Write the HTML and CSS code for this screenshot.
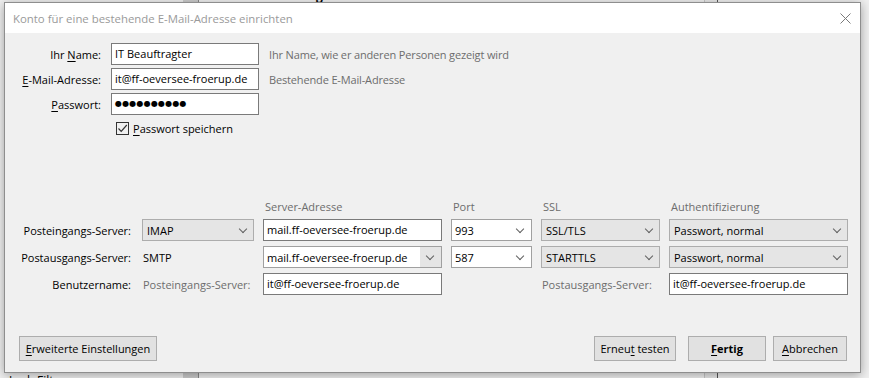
FILE: index.html
```html
<!DOCTYPE html>
<html lang="de">
<head>
    <meta charset="UTF-8">
    <meta name="viewport" content="width=device-width, initial-scale=1.0">
    <title>Konto einrichten</title>
    <link rel="stylesheet" href="styles.css">
</head>
<body>

    <!-- the mail client behind the dialog -->
    <div class="app">
        <div class="folder-pane">
            <div class="pane-top">Konten &amp; Ordner</div>
            <div class="pane-bottom">Junk-Filter</div>
        </div>
        <div class="scrollbar"></div>
        <div class="main-pane">
            <div class="pane-top bold">Server-Einstellungen</div>
        </div>
        <div class="scrollbar light"></div>
        <div class="side-pane"></div>
    </div>

    <div class="dialog">
        <div class="titlebar">
            <span class="title">Konto für eine bestehende E-Mail-Adresse einrichten</span>
            <svg class="close" width="11" height="11" viewBox="0 0 11 11">
                <path d="M0.5 0.5 L10.5 10.5 M10.5 0.5 L0.5 10.5" stroke="#7a7a7a" stroke-width="1" fill="none"/>
            </svg>
        </div>

        <div class="dialog-body">
            <div class="account-form">
                <span class="lbl">Ihr <u>N</u>ame:</span>
                <div class="field">IT Beauftragter</div>
                <span class="hint">Ihr Name, wie er anderen Personen gezeigt wird</span>

                <span class="lbl"><u>E</u>-Mail-Adresse:</span>
                <div class="field">it@ff-oeversee-froerup.de</div>
                <span class="hint">Bestehende E-Mail-Adresse</span>

                <span class="lbl"><u>P</u>asswort:</span>
                <div class="field dots">●●●●●●●●●●</div>
                <span></span>

                <span></span>
                <div class="check-row">
                    <span class="checkbox">
                        <svg width="11" height="11" viewBox="0 0 11 11">
                            <path d="M1.5 5.5 L4.2 8.3 L9.8 2" stroke="#333" stroke-width="1.2" fill="none"/>
                        </svg>
                    </span>
                    <span><u>P</u>asswort speichern</span>
                </div>
                <span></span>
            </div>

            <div class="server-grid">
                <span></span>
                <span></span>
                <span class="col-head">Server-Adresse</span>
                <span class="col-head">Port</span>
                <span class="col-head">SSL</span>
                <span class="col-head">Authentifizierung</span>

                <span class="row-lbl">Posteingangs-Server:</span>
                <div class="select">IMAP</div>
                <div class="field">mail.ff-oeversee-froerup.de</div>
                <div class="combo"><span>993</span></div>
                <div class="select">SSL/TLS</div>
                <div class="select">Passwort, normal</div>

                <span class="row-lbl">Postausgangs-Server:</span>
                <span class="plain">SMTP</span>
                <div class="combo with-btn">
                    <span>mail.ff-oeversee-froerup.de</span>
                </div>
                <div class="combo"><span>587</span></div>
                <div class="select">STARTTLS</div>
                <div class="select">Passwort, normal</div>

                <span class="row-lbl">Benutzername:</span>
                <span class="plain muted">Posteingangs-Server:</span>
                <div class="field">it@ff-oeversee-froerup.de</div>
                <span></span>
                <span class="plain muted">Postausgangs-Server:</span>
                <div class="field">it@ff-oeversee-froerup.de</div>
            </div>

            <div class="footer">
                <button class="btn wide"><u>E</u>rweiterte Einstellungen</button>
                <div class="footer-right">
                    <button class="btn retest">Erneu<u>t</u> testen</button>
                    <button class="btn done"><u>F</u>ertig</button>
                    <button class="btn cancel"><u>A</u>bbrechen</button>
                </div>
            </div>
        </div>
    </div>

</body>
</html>
```

FILE: styles.css
```css
* {
    box-sizing: border-box;
}

body {
    margin: 0;
    padding: 0;
    overflow: hidden;
    font-family: "Open Sans", "Noto Sans", sans-serif;
    font-size: 11px;
    color: #000;
    background-color: #f0f0f0;
}

u {
    text-decoration-thickness: 1px;
    text-underline-offset: 2px;
}

/* background window */
.app {
    display: flex;
    height: 378px;
}

.folder-pane {
    width: 183px;
    display: flex;
    flex-direction: column;
    justify-content: space-between;
    padding-left: 9px;
    background-color: #f0f0f0;
}

.pane-top {
    margin-top: -11px;
    font-size: 12px;
    line-height: 14px;
    white-space: nowrap;
}

.pane-top.bold {
    font-weight: bold;
    padding-left: 15px;
}

.pane-bottom {
    margin-bottom: -10px;
    font-size: 12px;
    line-height: 14px;
}

.scrollbar {
    width: 16px;
    background-color: #cdcdcd;
    border-right: 1px solid #8a8a8a;
}

.scrollbar.light {
    width: 14px;
    background-color: #e8e8e8;
    border-left: 1px solid #c8c8c8;
    border-right: 1px solid #555;
}

.main-pane {
    width: 505px;
    background-color: #f0f0f0;
}

.side-pane {
    flex: 1;
    background-color: #f0f0f0;
}

/* dialog */
.dialog {
    position: absolute;
    left: 4px;
    top: 2px;
    width: 857px;
    height: 371px;
    border: 1px solid #8e8e8e;
    background-color: #f0f0f0;
    box-shadow: 0 2px 10px rgba(0, 0, 0, 0.35);
    display: flex;
    flex-direction: column;
}

.titlebar {
    height: 30px;
    background-color: #fff;
    display: flex;
    align-items: center;
    justify-content: space-between;
    padding: 0 9px 0 8px;
}

.title {
    color: #9a9a9a;
    font-size: 11.4px;
}

.close {
    display: block;
}

.dialog-body {
    flex: 1;
    display: flex;
    flex-direction: column;
    padding-top: 10px;
}

.account-form {
    display: grid;
    grid-template-columns: 98px 148px auto;
    grid-auto-rows: 22px;
    column-gap: 8px;
    row-gap: 3px;
    align-items: center;
}

.account-form .hint {
    margin-left: 2px;
    letter-spacing: -0.15px;
}

.lbl {
    text-align: right;
    padding-right: 2px;
}

.hint {
    color: #6d6d6d;
}

.field {
    height: 22px;
    border: 1px solid #7a7a7a;
    background-color: #fff;
    padding: 0 3px;
    line-height: 20px;
    white-space: nowrap;
    overflow: hidden;
}

.field.dots {
    font-family: "DejaVu Sans", sans-serif;
    font-size: 8px;
    letter-spacing: 0.2px;
    line-height: 19px;
}

.check-row {
    display: flex;
    align-items: center;
    gap: 4px;
    padding-left: 5px;
    margin-top: -2px;
}

.checkbox {
    width: 13px;
    height: 13px;
    border: 1px solid #333;
    display: flex;
    align-items: center;
    justify-content: center;
}

/* server settings */
.server-grid {
    display: grid;
    grid-template-columns: 128px 112px 179px 81px 119px 179px;
    grid-template-rows: 15px 22px 22px 22px;
    column-gap: 9px;
    row-gap: 5px;
    align-items: center;
    margin-top: 59px;
}

.col-head {
    color: #6d6d6d;
    padding-left: 2px;
    line-height: 15px;
}

.row-lbl {
    text-align: right;
    padding-right: 2px;
    white-space: nowrap;
}

.plain {
    padding-left: 1px;
    white-space: nowrap;
}

.muted {
    color: #6d6d6d;
}

.select {
    height: 22px;
    border: 1px solid #adadad;
    background-color: #e5e5e5;
    padding: 0 7px 0 4px;
    display: flex;
    align-items: center;
    justify-content: space-between;
}

.select::after,
.combo::after {
    content: "";
    width: 5px;
    height: 5px;
    border-right: 1px solid #606060;
    border-bottom: 1px solid #606060;
    transform: rotate(45deg);
    margin-top: -3px;
}

.combo {
    height: 22px;
    border: 1px solid #a0a0a0;
    background-color: #fff;
    padding: 0 8px 0 3px;
    display: flex;
    align-items: center;
    justify-content: space-between;
}

.combo.with-btn {
    background: linear-gradient(to right, #fff 156px, #e5e5e5 156px);
}

/* buttons */
.footer {
    margin-top: auto;
    display: flex;
    justify-content: space-between;
    align-items: center;
    padding: 0 13px 11px 14px;
}

.footer-right {
    display: flex;
    align-items: center;
}

.btn {
    height: 25px;
    border: 1px solid #adadad;
    background-color: #e1e1e1;
    font-family: inherit;
    font-size: 11px;
    color: #000;
    padding: 0;
    white-space: nowrap;
}

.btn.wide {
    width: 138px;
}

.btn.retest {
    width: 82px;
    margin-right: 12px;
}

.btn.done {
    width: 78px;
    font-weight: bold;
    margin-right: 7px;
}

.btn.cancel {
    width: 74px;
}
```
